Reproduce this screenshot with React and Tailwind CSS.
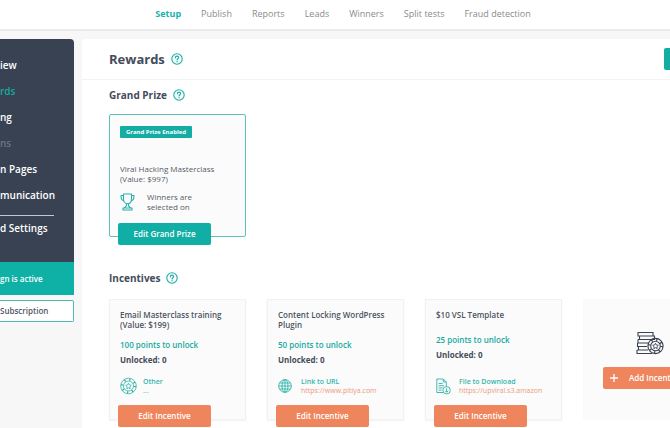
import React from 'react';

const tabs = ['Setup', 'Publish', 'Reports', 'Leads', 'Winners', 'Split tests', 'Fraud detection'];

const menu = [
  { label: 'iew' },
  { label: 'rds', state: 'active' },
  { label: 'ng' },
  { label: 'ns', state: 'muted' },
  { label: 'n Pages' },
  { label: 'munication' },
];

const incentives = [
  { title: 'Email Masterclass training (Value: $199)', points: 100, type: 'Other', detail: '...', icon: 'chip' },
  { title: 'Content Locking WordPress Plugin', points: 50, type: 'Link to URL', detail: 'https://www.pitiya.com', icon: 'globe' },
  { title: '$10 VSL Template', points: 25, type: 'File to Download', detail: 'https://upviral.s3.amazon', icon: 'file' },
];

const HelpIcon = () => (
  <svg viewBox="0 0 12 12" className="h-3 w-3 shrink-0" fill="none" stroke="#17aea5" strokeLinecap="round" aria-hidden="true">
    <circle cx="6" cy="6" r="5.2" strokeWidth="1.1" />
    <path d="M4.4 4.8c0-1 .7-1.6 1.6-1.6s1.6.6 1.6 1.4c0 1.1-1.5 1.2-1.5 2.3" strokeWidth="1.2" />
    <path d="M6.1 8.7v.1" strokeWidth="1.3" />
  </svg>
);

const TrophyIcon = () => (
  <svg viewBox="0 0 16 18" className="h-[18px] w-4 shrink-0" fill="none" stroke="#2bb0b0" strokeWidth="1.1" strokeLinejoin="round" aria-hidden="true">
    <path d="M3.5 1h8v4.5c0 3-1.4 5.3-4 5.3s-4-2.3-4-5.3z" />
    <path d="M3.5 2.5H1c0 3.2.8 5 3 5.5M11.5 2.5H14c0 3.2-.8 5-3 5.5" />
    <path d="M6.5 10.8v1.7c0 1-1.5 1.3-2 2.5h6c-.5-1.2-2-1.5-2-2.5v-1.7M3 15h9v2H3z" />
  </svg>
);

const ChipIcon = () => (
  <svg viewBox="0 0 18 18" className="h-[18px] w-[18px] shrink-0" fill="none" stroke="#2fb3a9" strokeWidth=".8" aria-hidden="true">
    <circle cx="8.5" cy="9" r="7.8" />
    <circle cx="8.5" cy="9" r="5" />
    <circle cx="8.5" cy="9" r="6.4" strokeWidth="2.4" strokeDasharray="1.2 3.83" />
    <path d="M8.5 6.2l.9 1.8 1.9.3-1.4 1.4.3 2-1.7-.9-1.7.9.3-2-1.4-1.4 1.9-.3z" />
  </svg>
);

const GlobeIcon = () => (
  <svg viewBox="0 0 14 14" className="h-3.5 w-3.5 shrink-0" fill="none" stroke="#2fb3a9" strokeWidth=".9" aria-hidden="true">
    <circle cx="7" cy="7" r="6.3" />
    <ellipse cx="7" cy="7" rx="3" ry="6.3" />
    <path d="M7 .7v12.6M.7 7h12.6M1.5 4h11M1.5 10h11" />
  </svg>
);

const FileIcon = () => (
  <svg viewBox="0 0 16 17" className="h-[17px] w-4 shrink-0" fill="none" stroke="#2fb3a9" strokeWidth=".9" aria-hidden="true">
    <path d="M7 14.5H.8V1h6.5l3 3v4.5M7.3 1v3h3" />
    <path d="M2.6 5.5h4M2.6 7.7h5.5M2.6 9.9h4M2.6 12.1h3" />
    <circle cx="10.6" cy="12.3" r="3.7" />
    <path d="M10.6 10.2v4M9.1 12.8l1.5 1.5 1.5-1.5" />
  </svg>
);

const CoinsIcon = () => (
  <svg viewBox="0 0 28 24" className="mr-1 h-6 w-7" fill="none" stroke="#3b4252" strokeWidth="1.1" aria-hidden="true">
    <path d="M2 1.5h15V5H2zM3.5 5h15v3.5h-15zM2 8.5h12M2 8.5V12h10M1.5 12h10M1.5 12v3.5h9.5M2.5 15.5V19H12M1 19h11M1 19v3.5h15M18.5 5v2" />
    <circle cx="19.5" cy="15" r="7.6" />
    <circle cx="19.5" cy="15" r="4.8" />
    <circle cx="19.5" cy="15" r="6.2" strokeWidth="2.4" strokeDasharray="1.2 3.67" />
    <path d="M19.5 12.3l.9 1.7 1.9.3-1.4 1.4.3 1.9-1.7-.9-1.7.9.3-1.9-1.4-1.4 1.9-.3z" strokeWidth=".9" />
  </svg>
);

const icons = { chip: ChipIcon, globe: GlobeIcon, file: FileIcon };

const SectionTitle = ({ children }) => (
  <div className="flex items-center gap-1.5">
    <h2 className="text-[10px] leading-4 font-bold text-[#434c5b]">{children}</h2>
    <HelpIcon />
  </div>
);

const IncentiveCard = ({ item }) => {
  const Icon = icons[item.icon];
  const short = item.title.length < 20;
  return (
    <article className="flex h-[121px] w-[137px] shrink-0 flex-col border border-[#f1f1f2] bg-[#fbfbfb] shadow-xs">
      <div className="px-2.5 pt-2.5">
        <h3 className="text-[8px] leading-[10px] font-semibold text-[#4c5461]">{item.title}</h3>
        <p className={`text-[8px] leading-3 font-semibold text-[#15aa9f] ${short ? 'mt-3.5' : 'mt-[9px]'}`}>{item.points} points to unlock</p>
        <p className="mt-[3px] text-[8px] leading-3 font-bold text-[#454d5a]">Unlocked: 0</p>
      </div>
      <div className="mt-auto flex h-6 items-center px-2.5">
        <div className="flex w-[23px] shrink-0"><Icon /></div>
        <div className="min-w-0 text-[7px] leading-[9px]">
          <p className="font-semibold text-[#35b5ab]">{item.type}</p>
          {item.detail === '...' ? (
            <p className="text-[#35b5ab]">{item.detail}</p>
          ) : (
            <a href={item.detail} className="block whitespace-nowrap text-[#ee9a7c]">{item.detail}</a>
          )}
        </div>
      </div>
      <button type="button" className="mt-[7px] -mb-2 ml-2 h-[22px] w-[93px] shrink-0 rounded-xs bg-[#ef855c] text-[8px] font-semibold text-white">
        Edit Incentive
      </button>
    </article>
  );
};

export default function App() {
  return (
    <div className="flex h-screen flex-col overflow-hidden bg-[#f7f7f8] font-['Open_Sans',sans-serif]">
      <header className="shrink-0 border-b-2 border-[#ebebeb] bg-white">
        <nav className="flex h-[29px] items-center justify-center gap-5 pb-0.5 pl-4">
          {tabs.map((tab, i) => (
            <a key={tab} href="#" className={`text-[9px] leading-3 whitespace-nowrap ${i === 0 ? 'font-bold text-[#16b1ae]' : 'text-[#8b8b8b]'}`}>
              {tab}
            </a>
          ))}
        </nav>
      </header>

      <div className="flex min-h-0 flex-1 gap-2 pt-2">
        <aside className="w-[74px] shrink-0">
          <div className="overflow-hidden rounded-tr bg-[#394253]">
            <nav className="flex flex-col gap-2.5 pt-[18px] pb-[26px]">
              {menu.map((item) => (
                <a
                  key={item.label}
                  href="#"
                  className={`text-[10px] leading-4 font-semibold whitespace-nowrap ${item.state === 'active' ? 'text-[#17a99f]' : item.state === 'muted' ? 'text-[#6b7482]' : 'text-white'}`}
                >
                  {item.label}
                </a>
              ))}
              <hr className="mt-0.5 mr-5 border-t border-[#c3c8cf]" />
              <a href="#" className="-mt-1.5 text-[10px] leading-4 font-semibold whitespace-nowrap text-white">d Settings</a>
            </nav>
            <div className="flex h-[33px] items-center bg-[#0fb0a5] text-[8px] font-semibold whitespace-nowrap text-white">gn is active</div>
          </div>
          <button type="button" className="mt-[5px] flex h-[22px] w-full items-center rounded-r-xs border border-l-0 border-[#4fb9b2] bg-white text-[8px] font-semibold text-[#505864]">
            Subscription
          </button>
        </aside>

        <main className="min-w-0 flex-1 overflow-hidden rounded-tl bg-white">
          <div className="flex h-[41px] items-center justify-between border-b border-[#f3f3f3] pl-[27px]">
            <div className="flex items-center gap-1.5">
              <h1 className="text-[13px] leading-5 font-bold text-[#434c5b]">Rewards</h1>
              <HelpIcon />
            </div>
            <button type="button" aria-label="Save" className="h-[22px] w-1.5 rounded-l-xs bg-[#14ada3]" />
          </div>

          <section className="pt-[7px] pl-[27px]">
            <SectionTitle>Grand Prize</SectionTitle>
            <article className="mt-[11px] flex h-[123px] w-[137px] flex-col rounded-xs border border-[#5cc2b9] bg-[#fbfbfb]">
              <div className="px-2.5 pt-[11px] text-[8px] leading-[10px] text-[#555c66]">
                <span className="flex h-3 w-[72px] items-center justify-center rounded-[1px] bg-[#13ada3] text-[6px] font-bold whitespace-nowrap text-white">
                  Grand Prize Enabled
                </span>
                <h3 className="mt-[26px]">Viral Hacking Masterclass (Value: $997)</h3>
                <div className="mt-2 flex items-center gap-[11px]">
                  <TrophyIcon />
                  <p>Winners are<br />selected on</p>
                </div>
              </div>
              <button type="button" className="mt-auto -mb-[9px] ml-2 h-[22px] w-[93px] shrink-0 rounded-xs bg-[#10aea4] text-[8px] font-semibold text-white">
                Edit Grand Prize
              </button>
            </article>
          </section>

          <section className="mt-[33px] pl-[27px]">
            <SectionTitle>Incentives</SectionTitle>
            <div className="mt-[13px] flex gap-[21px]">
              {incentives.map((item) => (
                <IncentiveCard key={item.title} item={item} />
              ))}
              <article className="flex h-[121px] w-[137px] shrink-0 flex-col items-center border border-[#fafafa] bg-[#fbfbfb] pt-[31px]">
                <CoinsIcon />
                <button type="button" className="mt-3 flex h-[22px] w-[97px] items-center gap-[11px] rounded-xs bg-[#ef855c] px-[7px] text-[8px] font-semibold whitespace-nowrap text-white">
                  <svg viewBox="0 0 8 8" className="h-2 w-2 shrink-0" stroke="currentColor" strokeWidth="1.3" aria-hidden="true">
                    <path d="M4 0v8M0 4h8" />
                  </svg>
                  Add Incentive
                </button>
              </article>
            </div>
          </section>
        </main>
      </div>
    </div>
  );
}
